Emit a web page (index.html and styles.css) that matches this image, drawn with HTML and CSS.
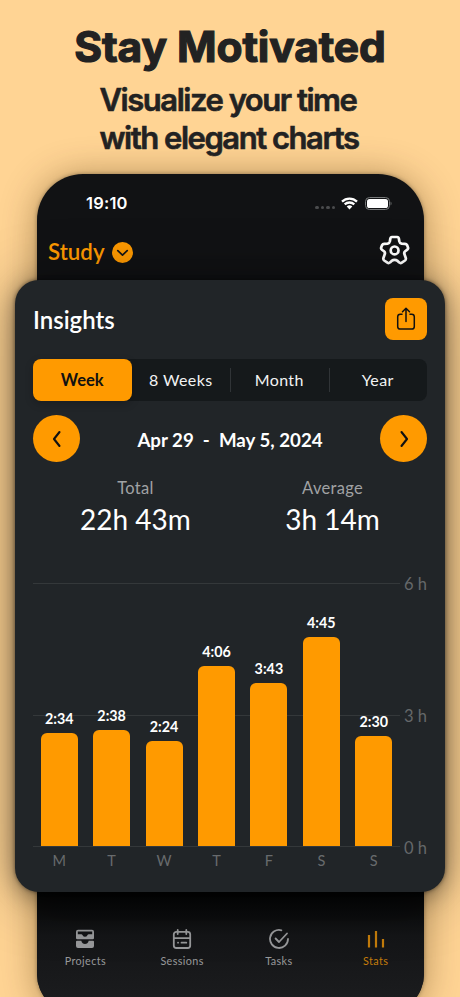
FILE: index.html
```html
<!DOCTYPE html>
<html lang="en">
<head>
    <meta charset="UTF-8">
    <meta name="viewport" content="width=device-width, initial-scale=1.0">
    <title>Stay Motivated</title>
    <link rel="stylesheet" href="styles.css">
</head>
<body>
    <header class="promo">
      <h1>Stay Motivated</h1>
      <h2>Visualize your time<br>with elegant charts</h2>
    </header>

    <main class="phone">
      <div class="status-bar">
        <span class="time">19:10</span>
        <div class="status-icons">
          <div class="dots"><i></i><i></i><i></i><i></i></div>
          <svg class="wifi" width="17" height="13" viewBox="0 0 17 13" fill="none" stroke="#fff" stroke-width="2.3">
            <path d="M1 4.6a10.8 10.8 0 0 1 15 0"/>
            <path d="M3.7 7.4a7 7 0 0 1 9.6 0"/>
            <path d="M8.5 12.5 5.7 9.6a4 4 0 0 1 5.6 0z" fill="#fff" stroke="none"/>
          </svg>
          <svg class="battery" width="27" height="13" viewBox="0 0 27 13">
            <rect x=".5" y=".5" width="24" height="12" rx="4" fill="none" stroke="#77797a"/>
            <rect x="2" y="2" width="21" height="9" rx="2.6" fill="#fff"/>
            <path d="M25.6 4.5c1.2.5 1.2 3.5 0 4z" fill="#77797a"/>
          </svg>
        </div>
      </div>

      <div class="top-bar">
        <div class="project">
          <span>Study</span>
          <svg width="21" height="21" viewBox="0 0 21 21">
            <circle cx="10.5" cy="10.5" r="10.5" fill="#ff9a00"/>
            <path d="M5.8 8.7l4.7 4.4 4.7-4.4" fill="none" stroke="#141517" stroke-width="1.7" stroke-linecap="round" stroke-linejoin="round"/>
          </svg>
        </div>
        <svg class="gear" width="32" height="32" viewBox="0 0 32 32" fill="none" stroke="#fff" stroke-width="2.7" stroke-linejoin="round">
          <path d="M13 2H18.2Q19.6 2 19.9 3.8L20.3 6.2Q20.7 8.2 22.6 8.6L25.8 8.8Q27.4 8.7 28.1 10.1L29 12.4Q29.5 13.8 28.3 14.7L26.2 16.3Q24.9 17.4 25.3 18.8L26.7 22.8Q27.3 24.5 26 25.5L22.8 27.7Q21.4 28.6 20.2 27.4L18.6 25.9Q17.1 24.8 15.6 24.8Q14.1 24.8 12.6 25.9L11 27.4Q9.8 28.6 8.4 27.7L5.2 25.5Q3.9 24.5 4.5 22.8L5.9 18.8Q6.3 17.4 5 16.3L2.9 14.7Q1.7 13.8 2.2 12.4L3.1 10.1Q3.8 8.7 5.4 8.8L8.6 8.6Q10.5 8.2 10.9 6.2L11.3 3.8Q11.6 2 13 2Z"/>
          <circle cx="15.6" cy="15.4" r="3.9"/>
        </svg>
      </div>

      <section class="card">
        <div class="card-header">
          <h3>Insights</h3>
          <button class="share" type="button">
            <svg width="20" height="24" viewBox="0 0 20 24" fill="none" stroke="#111" stroke-width="1.5" stroke-linecap="round" stroke-linejoin="round">
              <path d="M6 7.2H4.3Q1.7 7.2 1.7 9.8V19.4Q1.7 22 4.3 22H15.7Q18.3 22 18.3 19.4V9.8Q18.3 7.2 15.7 7.2H14"/>
              <path d="M10 14.5V1.5M6.5 4.7L10 1.3l3.5 3.4"/>
            </svg>
          </button>
        </div>

        <div class="tabs">
          <div class="tab active">Week</div>
          <div class="tab">8 Weeks</div>
          <div class="tab divided">Month</div>
          <div class="tab divided">Year</div>
        </div>

        <div class="range">
          <button class="round" type="button">
            <svg width="10" height="18" viewBox="0 0 10 18"><path d="M7.5 2L2 9l5.5 7"/></svg>
          </button>
          <span>Apr 29&nbsp; - &nbsp;May 5, 2024</span>
          <button class="round" type="button">
            <svg width="10" height="18" viewBox="0 0 10 18"><path d="M2.5 2L8 9l-5.5 7"/></svg>
          </button>
        </div>

        <div class="totals">
          <div class="total">
            <span class="label">Total</span>
            <span class="value">22h 43m</span>
          </div>
          <div class="total">
            <span class="label">Average</span>
            <span class="value">3h 14m</span>
          </div>
        </div>

        <div class="chart">
          <div class="plot">
            <div class="bar-col"><span>2:34</span><div class="bar" style="height: 113px"></div></div>
            <div class="bar-col"><span>2:38</span><div class="bar" style="height: 116px"></div></div>
            <div class="bar-col"><span>2:24</span><div class="bar" style="height: 105.5px"></div></div>
            <div class="bar-col"><span>4:06</span><div class="bar" style="height: 180.5px"></div></div>
            <div class="bar-col"><span>3:43</span><div class="bar" style="height: 163.5px"></div></div>
            <div class="bar-col"><span>4:45</span><div class="bar" style="height: 209px"></div></div>
            <div class="bar-col"><span>2:30</span><div class="bar" style="height: 110.5px"></div></div>
          </div>
          <div class="axis">
            <span>6 h</span>
            <span>3 h</span>
            <span>0 h</span>
          </div>
        </div>
        <div class="days">
          <span>M</span><span>T</span><span>W</span><span>T</span><span>F</span><span>S</span><span>S</span>
        </div>
      </section>

      <nav class="tab-bar">
        <div class="nav-item">
          <svg width="20" height="20" viewBox="0 0 20 20">
            <path fill="#98999b" fill-rule="evenodd" d="M3 .8H17Q19 .8 19 2.8V9Q19 10.2 17.8 10.2H2.2Q1 10.2 1 9V2.8Q1 .8 3 .8ZM2.8 2.6V5.3H6.2Q7.2 5.3 7.6 6.2Q8.4 7.8 10 7.8Q11.6 7.8 12.4 6.2Q12.8 5.3 13.8 5.3H17.2V2.6Z"/>
            <path fill="#98999b" d="M2 11.7H6.3Q7.2 15 10 15Q12.8 15 13.7 11.7H18Q19 11.7 19 12.7V17Q19 19 17 19H3Q1 19 1 17V12.7Q1 11.7 2 11.7Z"/>
          </svg>
          <span>Projects</span>
        </div>
        <div class="nav-item">
          <svg width="20" height="20" viewBox="0 0 20 20" fill="none" stroke="#98999b" stroke-width="1.8" stroke-linecap="round">
            <rect x="1.8" y="2.8" width="16.4" height="16.2" rx="2.5"/>
            <path d="M5.7 1v4M14.3 1v4M2 9.2h16M6 13.7h.1M9.5 13.7h4.8"/>
          </svg>
          <span>Sessions</span>
        </div>
        <div class="nav-item">
          <svg width="20" height="20" viewBox="0 0 20 20" fill="none" stroke="#98999b" stroke-width="1.8" stroke-linecap="round" stroke-linejoin="round">
            <path d="M12.4 1.3A9 9 0 1 0 19 10"/>
            <path d="M6.6 9.5l3.4 3.5L18 4.5"/>
          </svg>
          <span>Tasks</span>
        </div>
        <div class="nav-item current">
          <svg width="20" height="20" viewBox="0 0 20 20" fill="none" stroke="#c47c0b" stroke-width="2.2">
            <path d="M3 6v12.5M10 2v16.5M17 10v8.5"/>
          </svg>
          <span>Stats</span>
        </div>
      </nav>
    </main>
</body>
</html>
```
FILE: styles.css
```css
* {
  margin: 0;
  padding: 0;
  box-sizing: border-box;
}
html, body {
  height: 997px;
  overflow: hidden;
}
body {
  width: 460px;
  font-family: Lato, sans-serif;
  background-color: #ffd494;
}
.promo {
  height: 174px;
  padding-top: 21px;
  font-family: Inter, sans-serif;
  color: #222;
  position: relative;
  z-index: 1;
}
h1 {
  font-size: 42.5px;
  line-height: 52px;
  font-weight: 700;
  letter-spacing: -0.1px;
  text-align: center;
  -webkit-text-stroke: 1.2px #222;
}
h2 {
  margin: 7.5px 0 0 99.5px;
  font-size: 31px;
  line-height: 38px;
  font-weight: 600;
  letter-spacing: -1.47px;
  white-space: nowrap;
  -webkit-text-stroke: 0.6px #222;
}
.phone {
  width: 387px;
  height: 840px;
  margin-left: 37px;
  border-radius: 46px 46px 40px 40px;
  background: #111214;
  box-shadow: 0 0 4px rgba(0, 0, 0, 0.35), 0 2px 36px rgba(70, 40, 0, 0.42);
}
.status-bar {
  height: 56px;
  padding: 2px 32px 0 49px;
  display: flex;
  align-items: center;
  justify-content: space-between;
  color: #fff;
}
.time {
  font-family: Inter, sans-serif;
  font-size: 16.5px;
  font-weight: 600;
  letter-spacing: 0.2px;
}
.status-icons {
  display: flex;
  align-items: center;
}
.dots {
  display: flex;
  gap: 2px;
  margin: 9px 6px 0 0;
}
.dots i {
  width: 3.5px;
  height: 3.5px;
  border-radius: 50%;
  background: #4b4c4e;
}
.battery {
  margin-left: 7px;
}
.top-bar {
  height: 50px;
  padding: 0 13px 8px 11px;
  display: flex;
  align-items: center;
  justify-content: space-between;
}
.project {
  display: flex;
  align-items: center;
  gap: 7px;
  margin-top: 3px;
  font-size: 22.3px;
  line-height: 28px;
  font-weight: 600;
  color: #ff9a00;
}
.project span {
  padding-bottom: 2px;
}
.card {
  height: 612px;
  margin: 0 -21px 0 -22px;
  padding: 18px;
  border-radius: 24px;
  background: #212528;
  box-shadow: 0 0 4px rgba(0, 0, 0, 0.5), 0 4px 22px rgba(0, 0, 0, 0.36), 0 4px 60px rgba(0, 0, 0, 0.36);
  position: relative;
}
.card-header {
  display: flex;
  align-items: center;
  justify-content: space-between;
  height: 42px;
}
h3 {
  font-size: 24px;
  line-height: 28px;
  font-weight: 600;
  color: #fff;
  padding-top: 2px;
}
.share {
  width: 42px;
  height: 42px;
  border: none;
  border-radius: 8px;
  background: #ff9a00;
  display: flex;
  align-items: center;
  justify-content: center;
}
.tabs {
  display: flex;
  height: 42px;
  margin-top: 19px;
  border-radius: 8px;
  background: #15191b;
}
.tab {
  flex: 1;
  display: flex;
  align-items: center;
  justify-content: center;
  padding-bottom: 1px;
  color: #f2f3f3;
  font-size: 16px;
  letter-spacing: 0.4px;
}
.tab.active {
  padding-bottom: 0;
  border-radius: 8px;
  background: #ff9a00;
  color: #111;
  font-size: 16.5px;
  font-weight: 700;
  letter-spacing: 0;
  box-shadow: 0 3px 8px rgba(0, 0, 0, 0.2);
}
.tab.divided {
  background: linear-gradient(#303437, #303437) 0 50% / 1px 24px no-repeat;
}
.range {
  display: flex;
  align-items: center;
  justify-content: space-between;
  margin-top: 14px;
  height: 47px;
  color: #fff;
  font-size: 18.7px;
  font-weight: 700;
}
.range span {
  padding-top: 2px;
}
.round {
  width: 47px;
  height: 47px;
  border: none;
  border-radius: 50%;
  background: #ff9a00;
  display: flex;
  align-items: center;
  justify-content: center;
}
.round path {
  fill: none;
  stroke: #111;
  stroke-width: 2.1;
  stroke-linecap: round;
  stroke-linejoin: round;
}
.totals {
  display: flex;
  height: 121px;
  padding-top: 14px;
}
.total {
  flex: 1;
  padding-left: 8px;
  display: flex;
  flex-direction: column;
  align-items: center;
}
.total + .total {
  padding: 0 0 0 8px;
}
.label {
  font-size: 16.5px;
  line-height: 24px;
  letter-spacing: 0.3px;
  color: #a0a2a4;
}
.value {
  font-size: 28px;
  line-height: 39px;
  color: #fff;
}
.chart {
  display: flex;
  height: 264px;
}
.plot {
  width: 367px;
  display: flex;
  align-items: flex-end;
  background:
    linear-gradient(#34383a, #34383a) 0 0 / 100% 1px no-repeat,
    linear-gradient(#34383a, #34383a) 0 50% / 100% 1px no-repeat,
    linear-gradient(#34383a, #34383a) 0 100% / 100% 1px no-repeat;
}
.bar-col {
  flex: 1;
  display: flex;
  flex-direction: column;
  align-items: center;
  gap: 4px;
  color: #fff;
  font-size: 14.3px;
  line-height: 20px;
  font-weight: 700;
}
.bar {
  width: 37px;
  margin-bottom: 1px;
  border-radius: 6px 6px 0 0;
  background: #ff9a00;
}
.axis {
  flex: 1;
  display: flex;
  flex-direction: column;
  justify-content: space-between;
  margin: -9px 0 -11px;
  text-align: right;
  white-space: nowrap;
  color: #65686a;
  font-size: 16.5px;
  line-height: 20px;
}
.days {
  display: flex;
  width: 367px;
  padding-top: 4px;
  color: #686b6d;
  font-size: 14.5px;
  line-height: 20px;
}
.days span {
  flex: 1;
  text-align: center;
}
.tab-bar {
  display: flex;
  height: 122px;
  padding-top: 36.5px;
  border-radius: 0 0 40px 40px;
  background: linear-gradient(#040505 0, #0b0c0d 20px, #141517 44px, #1b1c1e 110px);
}
.nav-item {
  flex: 1;
  display: flex;
  flex-direction: column;
  align-items: center;
  gap: 4px;
  color: #98999b;
  font-size: 10.8px;
  line-height: 15px;
  letter-spacing: 0.4px;
}
.nav-item.current {
  color: #c47c0b;
}
```
